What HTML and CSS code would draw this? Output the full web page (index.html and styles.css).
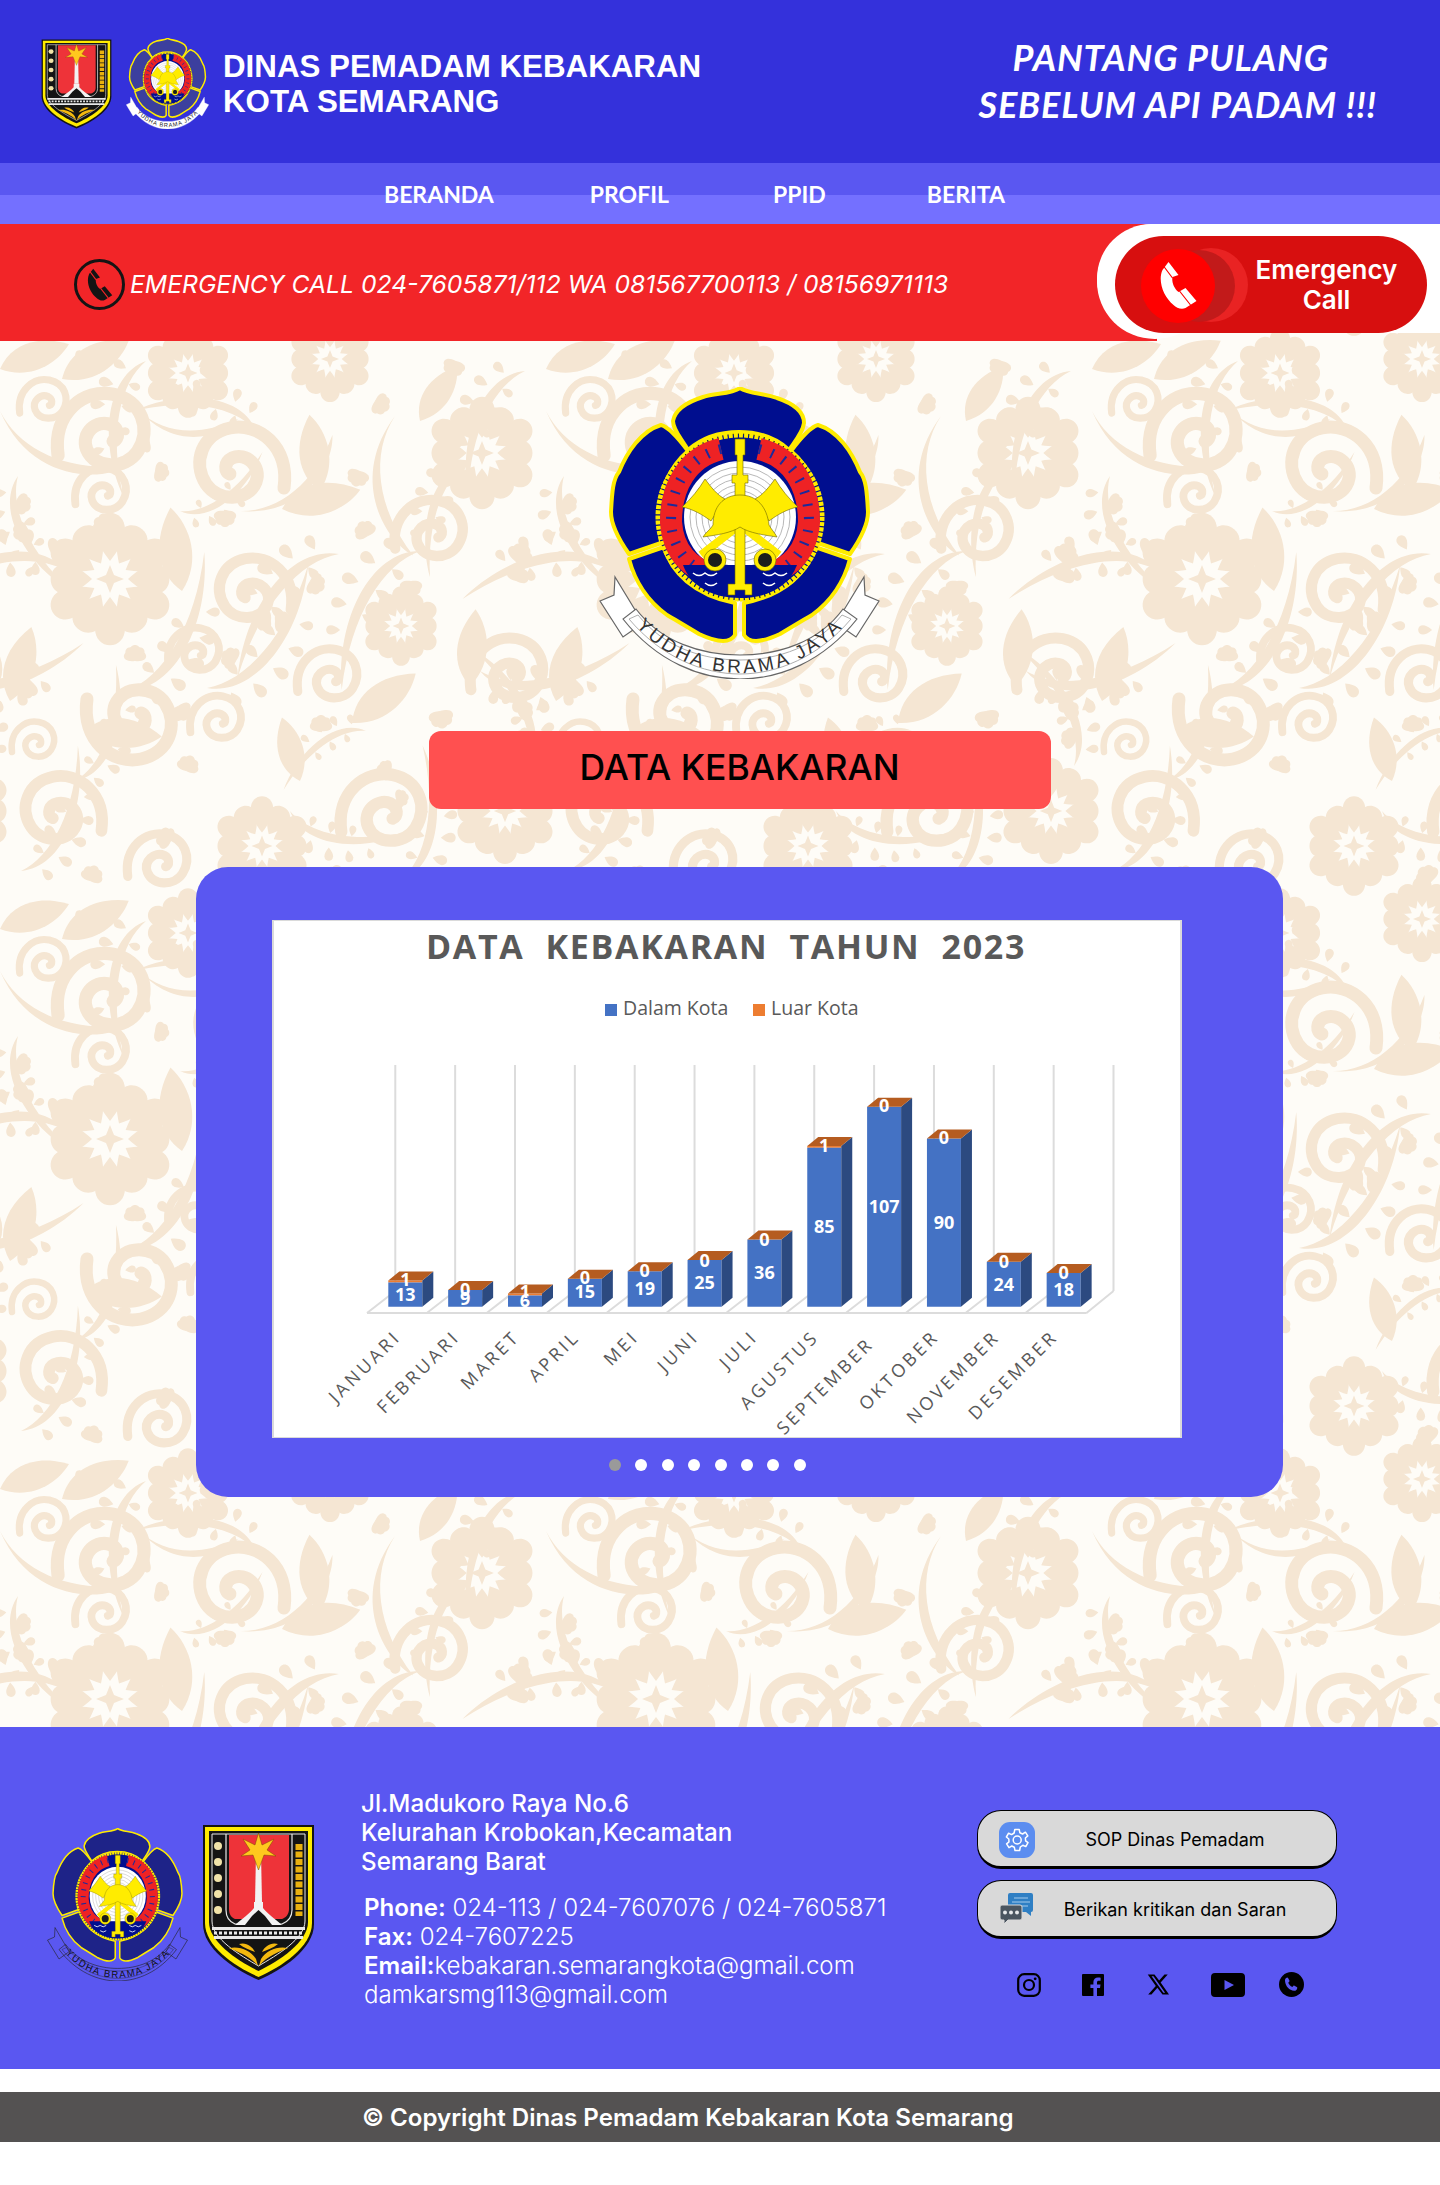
FILE: index.html
```html
<!DOCTYPE html>
<html lang="id">
<head>
<meta charset="utf-8">
<title>Dinas Pemadam Kebakaran Kota Semarang</title>
<link rel="stylesheet" href="styles.css">
</head>
<body>
<div class="page">

<svg class="bg-art" width="1440" height="1728" aria-hidden="true">
  <defs>
    <path id="dr" d="M0 0C5 -6 7.500 -11 7.500 -15C7.500 -20 4 -23 0 -23C-4 -23 -7.500 -20 -7.500 -15C-7.500 -11 -5 -6 0 0Z"/>
    <g id="fl">
      <path d="M0 -7L2 -2L7 0L2 2L0 7L-2 2L-7 0L-2 -2Z"/>
      <use href="#dr" transform="rotate(0) translate(0,-9) scale(1,1.05)"/>
      <use href="#dr" transform="rotate(30) translate(0,-9) scale(1,.9)"/>
      <use href="#dr" transform="rotate(60) translate(0,-9) scale(1,1.05)"/>
      <use href="#dr" transform="rotate(90) translate(0,-9) scale(1,.9)"/>
      <use href="#dr" transform="rotate(120) translate(0,-9) scale(1,1.05)"/>
      <use href="#dr" transform="rotate(150) translate(0,-9) scale(1,.9)"/>
      <use href="#dr" transform="rotate(180) translate(0,-9) scale(1,1.05)"/>
      <use href="#dr" transform="rotate(210) translate(0,-9) scale(1,.9)"/>
      <use href="#dr" transform="rotate(240) translate(0,-9) scale(1,1.05)"/>
      <use href="#dr" transform="rotate(270) translate(0,-9) scale(1,.9)"/>
      <use href="#dr" transform="rotate(300) translate(0,-9) scale(1,1.05)"/>
      <use href="#dr" transform="rotate(330) translate(0,-9) scale(1,.9)"/>
    </g>
    <path id="sw" class="bg-stroke" d="M-46 22C-52 -20 -20 -44 8 -38C36 -32 46 -4 32 18C20 36 -10 36 -18 16C-24 0 -8 -14 6 -8C14 -4 14 6 8 8"/>
    <path id="lf" d="M0 0C8 -26 34 -38 66 -32C56 -10 30 8 0 0Z"/>
    <path id="tl" d="M0 0C20 40 70 62 130 54C100 72 30 70 0 0Z"/>
    <g id="cl">
      <use href="#dr" transform="rotate(-56) scale(.55)"/>
      <use href="#dr" transform="rotate(-28) scale(.65)"/>
      <use href="#dr" transform="rotate(0) scale(.7)"/>
      <use href="#dr" transform="rotate(28) scale(.65)"/>
      <use href="#dr" transform="rotate(56) scale(.55)"/>
    </g>
    <g id="fern">
      <path d="M0 0C35 -6 72 -46 92 -112C86 -48 44 8 0 0Z"/>
      <use href="#dr" transform="translate(22,4) rotate(150) scale(.62)"/>
      <use href="#dr" transform="translate(42,-4) rotate(135) scale(.68)"/>
      <use href="#dr" transform="translate(60,-18) rotate(120) scale(.68)"/>
      <use href="#dr" transform="translate(74,-36) rotate(110) scale(.62)"/>
      <use href="#dr" transform="translate(84,-58) rotate(100) scale(.55)"/>
      <use href="#dr" transform="translate(28,-12) rotate(-40) scale(.55)"/>
      <use href="#dr" transform="translate(46,-28) rotate(-45) scale(.6)"/>
      <use href="#dr" transform="translate(62,-48) rotate(-50) scale(.55)"/>
    </g>
    <g id="t2">
      <use href="#fern" transform="translate(207,347) scale(1.1)"/>
      <use href="#fern" transform="translate(420,210) rotate(170) scale(1.1)"/>
      <use href="#fern" transform="translate(480,330) rotate(40) scale(1.05)"/>
      <use href="#fern" transform="translate(18,135) rotate(115) scale(.9)"/>
      <use href="#fern" transform="translate(75,440) rotate(-20) scale(.85)"/>
      <use href="#fern" transform="translate(290,470) rotate(60) scale(.85)"/>
      <use href="#fern" transform="translate(525,30) rotate(165) scale(.95)"/>
      <use href="#fern" transform="translate(400,540) rotate(-30) scale(.95)"/>
      <use href="#fern" transform="translate(180,170) rotate(15) scale(.7)"/>
      <use href="#cl" transform="translate(225,170) rotate(180) scale(1)"/>
      <use href="#cl" transform="translate(150,102) rotate(-100) scale(.8)"/>
      <use href="#cl" transform="translate(155,130) rotate(100) scale(.9)"/>
      <use href="#cl" transform="translate(275,280) rotate(90) scale(1)"/>
      <use href="#cl" transform="translate(310,240) rotate(120) scale(1)"/>
      <use href="#cl" transform="translate(28,188) rotate(-120) scale(1)"/>
      <use href="#cl" transform="translate(30,320) rotate(-160) scale(1)"/>
      <use href="#cl" transform="translate(135,320) rotate(0) scale(1)"/>
      <use href="#cl" transform="translate(178,365) rotate(150) scale(1)"/>
      <use href="#cl" transform="translate(375,60) rotate(120) scale(1)"/>
      <use href="#cl" transform="translate(515,220) rotate(45) scale(1.2)"/>
      <use href="#cl" transform="translate(440,370) rotate(170) scale(1.1)"/>
      <use href="#cl" transform="translate(340,540) rotate(-45) scale(1.1)"/>
      <use href="#cl" transform="translate(90,540) rotate(20) scale(1)"/>
      <use href="#cl" transform="translate(470,540) rotate(-100) scale(.9)"/>
      <use href="#cl" transform="translate(360,130) rotate(200) scale(1)"/>
      <use href="#cl" transform="translate(530,400) rotate(-60) scale(1)"/>
    </g>
    <g id="t" class="bg-motif">
      <use href="#fl" transform="translate(110,238) scale(2)"/>
      <use href="#fl" transform="translate(188,32) scale(1.35)"/>
      <use href="#fl" transform="translate(330,18) scale(1.3)"/>
      <use href="#fl" transform="translate(401,285) scale(1.2)"/>
      <use href="#fl" transform="translate(482,112) scale(1.7)"/>
      <use href="#fl" transform="translate(505,470) scale(1.6)"/>
      <use href="#fl" transform="translate(262,505) scale(1.5)"/>
      <use href="#sw" transform="translate(105,92) scale(1.02)"/>
      <use href="#sw" transform="translate(45,60) scale(.55)"/>
      <use href="#sw" transform="translate(238,125) scale(-1,1)"/>
      <use href="#sw" transform="translate(103,150) scale(.6)"/>
      <use href="#sw" transform="translate(252,250) scale(-.85,.85)"/>
      <use href="#sw" transform="translate(196,310) scale(.6)"/>
      <use href="#sw" transform="translate(133,380) scale(1,-1)"/>
      <use href="#sw" transform="translate(330,335) scale(.7)"/>
      <use href="#sw" transform="translate(218,378) scale(.6)"/>
      <use href="#sw" transform="translate(432,190) scale(.8)"/>
      <use href="#sw" transform="translate(60,470) scale(-.9,.9)"/>
      <use href="#sw" transform="translate(385,470) scale(.95)"/>
      <use href="#sw" transform="translate(160,520) scale(.7)"/>
      <use href="#sw" transform="translate(510,330) scale(.85)"/>
      <use href="#sw" transform="translate(35,400) scale(.5)"/>
      <use href="#lf" transform="translate(0,28) rotate(6) scale(1)"/>
      <use href="#lf" transform="translate(62,38) rotate(-4) scale(1.05)"/>
      <use href="#lf" transform="translate(320,150) rotate(-72) scale(1.05)"/>
      <use href="#lf" transform="translate(182,250) rotate(-72) scale(1.15)"/>
      <use href="#lf" transform="translate(282,168) rotate(12) scale(1.1)"/>
      <use href="#lf" transform="translate(10,360) rotate(-48) scale(1.05)"/>
      <use href="#lf" transform="translate(352,382) rotate(-12) scale(1.1)"/>
      <use href="#lf" transform="translate(85,390) rotate(30) scale(1.05)"/>
      <use href="#lf" transform="translate(470,345) rotate(-60) scale(1.05)"/>
      <use href="#lf" transform="translate(300,440) rotate(-80) scale(.9)"/>
      <use href="#lf" transform="translate(420,80) rotate(-30) scale(.9)"/>
      <use href="#lf" transform="translate(440,420) rotate(20) scale(.85)"/>
      <use href="#tl" transform="translate(0,70) rotate(0) scale(1)"/>
      <use href="#tl" transform="translate(240,170) rotate(-62) scale(.85)"/>
      <use href="#tl" transform="translate(395,75) rotate(60) scale(1)"/>
      <use href="#tl" transform="translate(140,70) rotate(-18) scale(.7)"/>
      <use href="#t2"/>
      <use href="#t2" transform="rotate(180 273 280)"/>
    </g>
    <pattern id="floral" width="546" height="560" x="0" y="341" patternUnits="userSpaceOnUse">
      <use href="#t"/>
      <use href="#t" x="-546"/>
      <use href="#t" x="546"/>
      <use href="#t" y="-560"/>
      <use href="#t" y="560"/>
      <use href="#t" x="-546" y="-560"/>
      <use href="#t" x="546" y="-560"/>
      <use href="#t" x="-546" y="560"/>
      <use href="#t" x="546" y="560"/>
    </pattern>

    <symbol id="emblem" viewBox="0 0 281 292" preserveAspectRatio="none">
      <path id="em-tail" class="em-ribbon" d="M1 214L15 208L16 190L44 236L24 250Z"/>
      <use href="#em-tail" transform="matrix(-1 0 0 1 281 0)"/>
      <path class="em-ribbon" d="M24 232C58 275 102 292 141 292C180 292 224 275 258 232L244 222C220 255 180 268 141 268C102 268 62 255 37 222Z"/>
      <path class="em-inset" d="M30 232C62 270 104 287 141 287C178 287 220 270 252 232L243 228C218 259 180 273 141 273C102 273 64 259 39 228Z"/>
      <path id="em-arc" class="em-none" d="M20 218C58 272 105 286 141 286C177 286 224 272 262 218"/>
      <text class="em-text"><textPath href="#em-arc" startOffset="50%" text-anchor="middle">YUDHA BRAMA JAYA</textPath></text>
      <g class="em-petal">
        <path d="M141 1C150 7 165 6 178 11C196 17 205 25 205 36C204 45 197 53 190 63C175 49 158 45 140 45C122 45 105 49 89 63C82 51 74 43 74 34C76 23 88 15 104 10C117 6 132 7 141 1Z"/>
        <path id="em-ul" d="M62 38C70 40 80 52 89 64C70 80 60 105 60 130C60 140 62 148 62 156L30 167C18 150 12 135 12 125C13 105 14 92 20 85C28 65 42 44 62 38Z"/>
        <use href="#em-ul" transform="matrix(-1 0 0 1 281 0)"/>
        <path id="em-ll" d="M30 172L65 160C72 185 95 208 136 216L136 248C130 258 115 254 100 247C85 238 75 232 68 228C50 215 36 195 30 172Z"/>
        <use href="#em-ll" transform="matrix(-1 0 0 1 281 0)"/>
      </g>
      <circle class="em-ring-bg" cx="141" cy="130" r="83"/>
      <circle class="em-ring" cx="141" cy="130" r="82"/>
      <circle class="em-white" cx="141" cy="130" r="56"/>
      <circle class="em-coil" cx="141" cy="130" r="50"/>
      <circle class="em-coil" cx="141" cy="130" r="44"/>
      <circle class="em-coil" cx="141" cy="130" r="38"/>
      <circle class="em-coil" cx="141" cy="130" r="32"/>
      <circle class="em-coil" cx="141" cy="130" r="26"/>
      <circle class="em-coil" cx="141" cy="130" r="20"/>
      <path class="em-wreath" d="M122 62C88 70 72 100 72 135C74 165 92 182 112 186"/>
      <path class="em-wreath" d="M160 62C194 70 210 100 210 135C208 165 190 182 170 186"/>
      <path class="em-flame" d="M122 62C88 70 72 100 72 135C74 165 92 182 112 186"/>
      <path class="em-flame" d="M160 62C194 70 210 100 210 135C208 165 190 182 170 186"/>
      <path class="em-water" d="M84 178H198C190 200 168 211 141 211C114 211 92 200 84 178Z"/>
      <path class="em-wave" d="M94 186q6 5 12 0q6 5 12 0M106 196q6 5 12 0M164 186q6 5 12 0q6 5 12 0M164 196q6 5 12 0"/>
      <path class="em-handle" d="M108 112L180 168M174 112L102 168"/>
      <path id="em-axe" class="em-gold" d="M106 92C112 100 118 108 126 112L112 134C104 128 94 122 83 120C92 112 100 102 106 92Z"/>
      <use href="#em-axe" transform="matrix(-1 0 0 1 282 0)"/>
      <path class="em-gold" d="M136 52H146V68H144V88H149V96H146V197H153V208H146V203H136V208H129V197H136V96H133V88H138V68H136Z"/>
      <path class="em-gold" d="M114 138C114 120 124 108 141 108C158 108 168 120 170 138C172 142 176 146 178 150C165 148 150 146 141 140C132 146 118 148 104 150C106 146 112 142 114 138Z"/>
      <circle class="em-gold" cx="116" cy="173" r="11"/>
      <circle class="em-gold" cx="166" cy="173" r="11"/>
      <circle class="em-dark" cx="116" cy="173" r="7"/>
      <circle class="em-dark" cx="166" cy="173" r="7"/>
    </symbol>

    <symbol id="crest" viewBox="0 0 113 157" preserveAspectRatio="none">
      <path class="cr-edge" d="M1 1H112V100C112 125 80 146 56.5 156C33 146 1 125 1 100Z"/>
      <path class="cr-yellow" d="M3 3H110V99C110 123 79 143 56.5 153C34 143 3 123 3 99Z"/>
      <path class="cr-edge" d="M7 7H106V98C106 118 77 137 56.5 147C36 137 7 118 7 98Z"/>
      <path class="cr-line" d="M10 10V97C10 115 38 131 56.5 142C75 131 103 115 103 97V10Z"/>
      <path class="cr-red" d="M27 11H87V85C87 91 83 94 80 95L33 95C30 94 27 91 27 85Z"/>
      <path class="cr-pale" d="M24 10V86C24 94 28 98 33 100H80C85 98 90 94 90 86V10"/>
      <path class="cr-white" d="M54 30H59L60 78H53Z"/>
      <path class="cr-star" d="M56.5 9L60 21L72 15L65 26L74 32L62 31L56.5 46L51 31L39 32L48 26L41 15L53 21Z"/>
      <path class="cr-white" d="M52 78H61V84C66 90 72 94 80 101H33C41 94 47 90 52 84Z"/>
      <path class="cr-edge" d="M50 92L56.500 86L63 92L70 101H43Z"/>
      <path class="cr-wall" d="M10 103H103V106H10Z"/>
      <path class="cr-brick" d="M12 109H101"/>
      <path class="cr-wall" d="M12 112H101V115H12Z"/>
      <path class="cr-gold" d="M27 124C38 122 48 126 54 135L56 142C48 132 36 128 27 124Z"/>
      <path class="cr-gold" d="M86 124C75 122 65 126 59 135L57 142C65 132 77 128 86 124Z"/>
      <path class="cr-gold" d="M37 120C44 118 50 122 53 128C48 126 42 124 37 120Z"/>
      <path class="cr-gold" d="M76 120C69 118 63 122 60 128C65 126 71 124 76 120Z"/>
      <g class="cr-bud">
        <circle cx="16" cy="22" r="4"/><circle cx="16" cy="38" r="4"/><circle cx="16" cy="54" r="4"/><circle cx="16" cy="70" r="4"/><circle cx="16" cy="86" r="4"/>
      </g>
      <path class="cr-rice" d="M97 20V92"/>
    </symbol>

    <symbol id="phone" viewBox="0 0 38 50">
      <path d="M9 1L19 14L13 16C12 20 14 27 19 31L26 27L37 40L26 47C22 49 17 47 14 44C4 36 -2 20 3 9Z"/>
    </symbol>
  </defs>
  <rect class="bg-base" width="1440" height="1728"/>
  <rect width="1440" height="1728" fill="url(#floral)"/>
</svg>

<header class="masthead">
  <svg class="crest-sm"><use href="#crest"/></svg>
  <svg class="emblem-sm"><use href="#emblem"/></svg>
  <h1 class="agency">DINAS PEMADAM KEBAKARAN<br>KOTA SEMARANG</h1>
  <p class="slogan"><span class="slogan-a">PANTANG PULANG</span><br>SEBELUM API PADAM !!!</p>
</header>

<nav class="menu">
  <a class="menu-home">BERANDA</a>
  <a class="menu-profil">PROFIL</a>
  <a class="menu-ppid">PPID</a>
  <a class="menu-berita">BERITA</a>
</nav>

<section class="alert-row">
  <div class="alert">
    <span class="alert-icon"><svg class="alert-phone" viewBox="0 0 38 50"><use href="#phone"/><path class="alert-cut" d="M4 5L13 17M20 30L31 44"/></svg></span>
    <span class="alert-text">EMERGENCY CALL 024-7605871/112 WA 081567700113 / 08156971113</span>
  </div>
  <div class="cta-slot">
    <a class="cta">
      <span class="cta-dial">
        <svg class="cta-phone" viewBox="0 0 38 50"><use href="#phone"/><path class="cta-cut" d="M4 5L13 17M20 30L31 44"/></svg>
      </span>
      <span class="cta-label">Emergency<br>Call</span>
    </a>
  </div>
</section>

<main class="content">
  <svg class="emblem-lg"><use href="#emblem"/></svg>
  <h2 class="section-title">DATA KEBAKARAN</h2>

  <section class="slider">
    <svg class="chart" viewBox="0 0 911 518" role="img" aria-label="Data kebakaran tahun 2023">
      <rect class="c-paper" x="1" y="0" width="908" height="518"/>
      <text class="c-title" x="454" y="39">DATA  KEBAKARAN  TAHUN  2023</text>
      <rect class="c-blue" x="333" y="84" width="12" height="12"/>
      <text class="c-legend" x="351" y="95">Dalam Kota</text>
      <rect class="c-orange" x="481" y="84" width="12" height="12"/>
      <text class="c-legend" x="499" y="95">Luar Kota</text>
      <path class="c-grid" d="M123.3 145V371M183.15 145V371M243 145V371M302.85 145V371M362.7 145V371M422.55 145V371M482.4 145V371M542.25 145V371M602.1 145V371M661.95 145V371M721.8 145V371M781.65 145V371M841.5 145V371"/>
      <path class="c-grid" d="M95 393H814.5M95 393L123.3 371M154.85 393L183.15 371M214.7 393L243 371M274.55 393L302.85 371M334.4 393L362.7 371M394.25 393L422.55 371M454.1 393L482.4 371M513.95 393L542.25 371M573.8 393L602.1 371M633.65 393L661.95 371M693.5 393L721.8 371M753.35 393L781.65 371M814.5 393L841.5 371"/>

      <g transform="translate(116.3,0)">
        <path class="c-o" d="M0 360.5H34V362.4H0Z"/><path class="c-f" d="M0 362.4H34V386.7H0Z"/><path class="c-s" d="M34 360.5l11 -9V377.7l-11 9Z"/><path class="c-t" d="M0 360.5l11 -9h34l-11 9Z"/>
        <text class="c-num" x="17" y="366">1</text><text class="c-num" x="17" y="381">13</text>
      </g>
      <g transform="translate(176.15,0)">
        <path class="c-f" d="M0 369.9H34V386.7H0Z"/><path class="c-s" d="M34 369.9l11 -9V377.7l-11 9Z"/><path class="c-t" d="M0 369.9l11 -9h34l-11 9Z"/>
        <text class="c-num" x="17" y="376">0</text><text class="c-num" x="17" y="385">9</text>
      </g>
      <g transform="translate(236,0)">
        <path class="c-o" d="M0 373.6H34V375.5H0Z"/><path class="c-f" d="M0 375.5H34V386.7H0Z"/><path class="c-s" d="M34 373.6l11 -9V377.7l-11 9Z"/><path class="c-t" d="M0 373.6l11 -9h34l-11 9Z"/>
        <text class="c-num" x="17" y="378">1</text><text class="c-num" x="17" y="387">6</text>
      </g>
      <g transform="translate(295.85,0)">
        <path class="c-f" d="M0 358.7H34V386.7H0Z"/><path class="c-s" d="M34 358.7l11 -9V377.7l-11 9Z"/><path class="c-t" d="M0 358.7l11 -9h34l-11 9Z"/>
        <text class="c-num" x="17" y="364">0</text><text class="c-num" x="17" y="378">15</text>
      </g>
      <g transform="translate(355.7,0)">
        <path class="c-f" d="M0 351.2H34V386.7H0Z"/><path class="c-s" d="M34 351.2l11 -9V377.7l-11 9Z"/><path class="c-t" d="M0 351.2l11 -9h34l-11 9Z"/>
        <text class="c-num" x="17" y="357">0</text><text class="c-num" x="17" y="375">19</text>
      </g>
      <g transform="translate(415.55,0)">
        <path class="c-f" d="M0 339.9H34V386.7H0Z"/><path class="c-s" d="M34 339.9l11 -9V377.7l-11 9Z"/><path class="c-t" d="M0 339.9l11 -9h34l-11 9Z"/>
        <text class="c-num" x="17" y="347">0</text><text class="c-num" x="17" y="369">25</text>
      </g>
      <g transform="translate(475.4,0)">
        <path class="c-f" d="M0 319.4H34V386.7H0Z"/><path class="c-s" d="M34 319.4l11 -9V377.7l-11 9Z"/><path class="c-t" d="M0 319.4l11 -9h34l-11 9Z"/>
        <text class="c-num" x="17" y="326">0</text><text class="c-num" x="17" y="359">36</text>
      </g>
      <g transform="translate(535.25,0)">
        <path class="c-o" d="M0 225.9H34V227.7H0Z"/><path class="c-f" d="M0 227.7H34V386.7H0Z"/><path class="c-s" d="M34 225.9l11 -9V377.7l-11 9Z"/><path class="c-t" d="M0 225.9l11 -9h34l-11 9Z"/>
        <text class="c-num" x="17" y="232">1</text><text class="c-num" x="17" y="313">85</text>
      </g>
      <g transform="translate(595.1,0)">
        <path class="c-f" d="M0 186.7H34V386.7H0Z"/><path class="c-s" d="M34 186.7l11 -9V377.7l-11 9Z"/><path class="c-t" d="M0 186.7l11 -9h34l-11 9Z"/>
        <text class="c-num" x="17" y="192">0</text><text class="c-num" x="17" y="293">107</text>
      </g>
      <g transform="translate(654.95,0)">
        <path class="c-f" d="M0 218.4H34V386.7H0Z"/><path class="c-s" d="M34 218.4l11 -9V377.7l-11 9Z"/><path class="c-t" d="M0 218.4l11 -9h34l-11 9Z"/>
        <text class="c-num" x="17" y="224">0</text><text class="c-num" x="17" y="309">90</text>
      </g>
      <g transform="translate(714.8,0)">
        <path class="c-f" d="M0 341.8H34V386.7H0Z"/><path class="c-s" d="M34 341.8l11 -9V377.7l-11 9Z"/><path class="c-t" d="M0 341.8l11 -9h34l-11 9Z"/>
        <text class="c-num" x="17" y="348">0</text><text class="c-num" x="17" y="371">24</text>
      </g>
      <g transform="translate(774.65,0)">
        <path class="c-f" d="M0 353H34V386.7H0Z"/><path class="c-s" d="M34 353l11 -9V377.7l-11 9Z"/><path class="c-t" d="M0 353l11 -9h34l-11 9Z"/>
        <text class="c-num" x="17" y="359">0</text><text class="c-num" x="17" y="376">18</text>
      </g>

      <text class="c-month" transform="translate(130,418) rotate(-45)">JANUARI</text>
      <text class="c-month" transform="translate(189,418) rotate(-45)">FEBRUARI</text>
      <text class="c-month" transform="translate(249,418) rotate(-45)">MARET</text>
      <text class="c-month" transform="translate(309,418) rotate(-45)">APRIL</text>
      <text class="c-month" transform="translate(368,418) rotate(-45)">MEI</text>
      <text class="c-month" transform="translate(428,418) rotate(-45)">JUNI</text>
      <text class="c-month" transform="translate(487,418) rotate(-45)">JULI</text>
      <text class="c-month" transform="translate(548,418) rotate(-45)">AGUSTUS</text>
      <text class="c-month" transform="translate(603,425) rotate(-45)">SEPTEMBER</text>
      <text class="c-month" transform="translate(668,418) rotate(-45)">OKTOBER</text>
      <text class="c-month" transform="translate(729,418) rotate(-45)">NOVEMBER</text>
      <text class="c-month" transform="translate(787,418) rotate(-45)">DESEMBER</text>
    </svg>
    <div class="dots">
      <span class="dot dot-on"></span><span class="dot"></span><span class="dot"></span><span class="dot"></span><span class="dot"></span><span class="dot"></span><span class="dot"></span><span class="dot"></span>
    </div>
  </section>
</main>

<footer class="site-foot">
  <div class="foot-logos">
    <svg class="emblem-ft"><use href="#emblem"/></svg>
    <svg class="crest-ft"><use href="#crest"/></svg>
  </div>
  <div class="foot-info">
    <p class="address">Jl.Madukoro Raya No.6<br>Kelurahan Krobokan,Kecamatan<br>Semarang Barat</p>
    <p class="contact"><b>Phone:</b> 024-113 / 024-7607076 / 024-7605871<br><b>Fax:</b> 024-7607225<br><b>Email:</b>kebakaran.semarangkota@gmail.com<br>damkarsmg113@gmail.com</p>
  </div>
  <div class="foot-actions">
    <a class="pill">
      <svg class="pill-icon" viewBox="0 0 37 37">
        <rect class="gear-bg" width="36" height="36" rx="11"/>
        <path class="gear" d="M15.8 7.5H20.2L20.9 10.8L23.6 12L26.4 10.2L28.8 13.9L26.4 16L26.6 18.8L29 20.7L26.8 24.6L23.8 23.3L21.3 25L20.6 28.5H16L15.3 25.2L12.8 24L10 25.6L7.6 21.8L10 19.8L9.8 17L7.4 15L9.6 11.2L12.6 12.6L15.1 11Z"/>
        <circle class="gear" cx="18.2" cy="18" r="4"/>
      </svg>
      <span class="pill-text">SOP Dinas Pemadam</span>
    </a>
    <a class="pill">
      <svg class="pill-icon" viewBox="0 0 37 37">
        <path class="msg-blue" d="M11 1H32Q34 1 34 3V18Q34 20 32 20L32 24L27 20H11Q9 20 9 18V3Q9 1 11 1Z"/>
        <path class="msg-lines" d="M15 6H29M13 10H31M15 14H29"/>
        <path class="msg-gray" d="M3 13H21Q23 13 23 15V26Q23 28 21 28H9L5 32V28H3Q1 28 1 26V15Q1 13 3 13Z"/>
        <circle class="msg-dot" cx="6" cy="20.5" r="2"/><circle class="msg-dot" cx="12" cy="20.5" r="2"/><circle class="msg-dot" cx="18" cy="20.5" r="2"/>
      </svg>
      <span class="pill-text">Berikan kritikan dan Saran</span>
    </a>
    <div class="socials">
      <svg class="so so-ig" viewBox="0 0 24 24"><rect class="so-line" x="1.2" y="1.2" width="21.6" height="21.6" rx="6"/><circle class="so-line" cx="12" cy="12" r="5"/><circle cx="18.2" cy="5.8" r="1.4"/></svg>
      <svg class="so so-fb" viewBox="0 0 22 22"><path fill-rule="evenodd" d="M1 0H21Q22 0 22 1V21Q22 22 21 22H15V14H18L18.5 10.5H15V8.5C15 7.4 15.5 6.8 16.8 6.8H18.6V3.7C18 3.6 17 3.5 16 3.5C13.3 3.5 11.4 5.2 11.4 8.1V10.5H8.4V14H11.4V22H1Q0 22 0 21V1Q0 0 1 0Z"/></svg>
      <svg class="so so-x" viewBox="0 0 24 24"><path fill-rule="evenodd" d="M18.24 1.5h3.4l-7.4 8.5L23 22.5h-6.85l-5.36-7-6.13 7H1.25l7.93-9.06L.8 1.5h7.02l4.84 6.4zM17.05 20.5h1.88L6.78 3.4H4.76z"/></svg>
      <svg class="so so-yt" viewBox="0 0 34 24"><path fill-rule="evenodd" d="M4 0H30Q34 0 34 4V20Q34 24 30 24H4Q0 24 0 20V4Q0 0 4 0ZM13.5 7V17L23 12Z"/></svg>
      <svg class="so so-wa" viewBox="0 0 25 25"><circle cx="12.5" cy="12.5" r="12.5"/><path class="so-wa-ph" d="M8.2 5.6c.4 0 .8.2 1 .6l1.2 2.4c.2.4.1.8-.2 1.1l-1 1c.9 1.9 2.1 3.2 4.1 4.2l1-1c.3-.3.7-.4 1.1-.2l2.4 1.2c.4.2.6.6.5 1-.3 1.8-1.5 3-3.2 2.9C10.300 18.300 6.600 14.500 6 9 5.800 7.300 6.600 5.900 8.200 5.600z"/></svg>
    </div>
  </div>
</footer>

<div class="foot-gap"></div>
<div class="copyright"><span class="copyright-text">© Copyright Dinas Pemadam Kebakaran Kota Semarang</span></div>
<div class="foot-end"></div>
</div>
</body>
</html>
```
FILE: styles.css
```css
* { box-sizing: border-box; }
html, body { margin: 0; padding: 0; }
body { font-family: "Inter", "Liberation Sans", sans-serif; background: #fff; }
a { text-decoration: none; color: inherit; }
h1, h2, p { margin: 0; }
svg { display: block; }

.page { position: relative; isolation: isolate; width: 1440px; height: 2185px; overflow: hidden; }

/* decorative page background */
.bg-art { position: absolute; left: 0; top: 0; z-index: -1; }
.bg-base { fill: #FEFCF7; }
.bg-motif { fill: #F5E6D3; }
.bg-stroke { fill: none; stroke: #F5E6D3; stroke-width: 13; stroke-linecap: round; }

/* masthead */
.masthead { display: flex; align-items: center; height: 163px; padding: 4px 63px 0 41px; background: #3431DB; color: #fff; }
.crest-sm { width: 71px; height: 90px; flex: none; }
.emblem-sm { width: 83px; height: 91px; margin-left: 14px; flex: none; }
.agency { margin-left: 14px; font: 700 31.3px/35px "Liberation Sans", sans-serif; white-space: nowrap; }
.slogan { margin: -6px 0 0 auto; font: italic 700 36px/47px "Lato", sans-serif; letter-spacing: .85px; text-align: center; white-space: nowrap; }
.slogan-a { display: inline-block; margin-right: 14px; }

/* menu */
.menu { display: flex; align-items: center; height: 61px; padding: 2px 0 0 384px; background: linear-gradient(#5A57F1 0 32px, #7470FF 32px 61px); color: #fff; font: 700 23px/1 "Lato", sans-serif; }
.menu-profil { margin-left: 96px; }
.menu-ppid { margin-left: 104px; }
.menu-berita { margin-left: 101px; }

/* emergency */
.alert-row { display: flex; height: 117px; }
.alert { flex: 1; margin-right: -60px; display: flex; align-items: center; gap: 5px; padding: 4px 0 0 74px; background: #F22528; }
.alert-icon { width: 51px; height: 51px; border: 3px solid #141414; border-radius: 50%; display: flex; align-items: center; justify-content: center; flex: none; }
.alert-phone { width: 26px; height: 34px; fill: #141414; }
.alert-cut { fill: none; stroke: #F22528; stroke-width: 1.6; }
.alert-text { color: #fff; font: italic 400 24.7px/1 "Inter", sans-serif; white-space: nowrap; }
.cta-slot { position: relative; z-index: 0; width: 343px; height: 109px; padding: 12px 13px 0 18px; background: #fff; border-radius: 58px 0 0 58px; }
.cta-slot::before { content: ""; position: absolute; left: 0; top: 0; z-index: -1; width: 116px; height: 115px; background: #fff; border-radius: 58px; }
.cta { display: flex; align-items: center; height: 97px; border-radius: 49px; background: #D70F0F; padding-left: 26px; color: #fff; }
.cta-dial { position: relative; z-index: 1; width: 74px; height: 74px; margin-top: 2px; border-radius: 50%; background: #FF0000; flex: none; display: flex; align-items: center; justify-content: center; box-shadow: 21px 0 0 -1px #C21A1A, 33px -1px 0 0 #E92323; }
.cta-phone { width: 39px; height: 50px; fill: #fff; }
.cta-cut { fill: none; stroke: #FF0000; stroke-width: 1.2; }
.cta-label { flex: 1; margin-left: 39px; text-align: center; font: 600 26px/30px "Inter", sans-serif; padding-right: 28px; position: relative; z-index: 1; }

/* content */
.content { height: 1386px; padding: 46px 0 0 39px; display: flex; flex-direction: column; align-items: center; }
.emblem-lg { width: 281px; height: 292px; flex: none; }
.section-title { width: 622px; height: 78px; margin-top: 52px; padding-bottom: 4px; flex: none; display: flex; align-items: center; justify-content: center; border-radius: 12px; background: #FF5050; color: #000; font: 500 35.5px/1 "Inter", sans-serif; }
.slider { width: 1087px; height: 630px; margin-top: 58px; padding: 53px 0 0 76px; border-radius: 32px; background: #5A57F1; flex: none; }
.chart { width: 911px; height: 518px; }
.dots { display: flex; gap: 14.4px; margin: 21px 0 0 337px; }
.dot { width: 12px; height: 12px; border-radius: 50%; background: #fff; }
.dot-on { background: #9A9A9A; }

/* chart */
.c-paper { fill: #fff; stroke: #DADADA; stroke-width: 2; }
.c-title { font: 700 34px "Open Sans", sans-serif; fill: #595959; text-anchor: middle; letter-spacing: 1.7px; white-space: pre; }
.c-legend { font: 400 19.5px "Open Sans", sans-serif; fill: #595959; }
.c-blue { fill: #4472C4; }
.c-orange { fill: #ED7D31; }
.c-grid { fill: none; stroke: #DCDCDC; stroke-width: 2; }
.c-f { fill: #4472C4; }
.c-o { fill: #ED7D31; }
.c-s { fill: #2C4A80; }
.c-t { fill: #B55C20; }
.c-num { font: 700 18px "Open Sans", sans-serif; fill: #fff; text-anchor: middle; }
.c-month { font: 400 18px "Open Sans", sans-serif; fill: #595959; text-anchor: end; letter-spacing: 3.2px; }

/* footer */
.site-foot { display: flex; height: 342px; background: #5A57F1; color: #fff; }
.foot-logos { display: flex; gap: 14px; width: 311px; padding: 97px 0 0 47px; flex: none; }
.emblem-ft { width: 141px; height: 153px; margin-top: 4px; flex: none; }
.crest-ft { width: 113px; height: 157px; flex: none; }
.foot-info { width: 616px; padding: 62px 0 0 50px; flex: none; }
.address { font: 500 24.2px/29px "Inter", sans-serif; white-space: nowrap; }
.contact { margin: 17px 0 0 3px; font: 300 24.1px/29px "Inter", sans-serif; white-space: nowrap; }
.contact b { font-weight: 600; }
.foot-actions { padding: 83px 0 0 50px; width: 410px; flex: none; }
.pill { display: flex; align-items: center; position: relative; width: 360px; height: 59px; margin-bottom: 11px; padding: 3px 0 0 21px; border: 1px solid #000; border-bottom-width: 3px; border-radius: 24px; background: #D9D9D9; color: #000; }
.pill-icon { width: 37px; height: 37px; flex: none; }
.pill-text { flex: 1; text-align: center; font: 400 18px/1 "Inter", sans-serif; padding-right: 22px; white-space: nowrap; }
.gear-bg { fill: #5B8DF0; }
.gear { fill: none; stroke: #fff; stroke-width: 1.5; stroke-linejoin: round; }
.msg-blue { fill: #2F7FC4; }
.msg-lines { fill: none; stroke: #A6CCEB; stroke-width: 1.2; }
.msg-gray { fill: #4A5560; stroke: #D9D9D9; stroke-width: 1; }
.msg-dot { fill: #E6E8EA; }
.socials { display: flex; align-items: center; margin: 33px 0 0 40px; }
.so { fill: #000; flex: none; }
.so-line { fill: none; stroke: #000; stroke-width: 2.2; }
.so-ig { width: 24px; height: 24px; }
.so-fb { width: 22px; height: 22px; margin-left: 41px; }
.so-x { width: 23px; height: 23px; margin-left: 43px; }
.so-yt { width: 34px; height: 24px; margin-left: 41px; }
.so-wa { width: 25px; height: 25px; margin-left: 34px; }
.so-wa-ph { fill: #5A57F1; }

.foot-gap { height: 23px; background: #fff; }
.copyright { height: 50px; padding: 2px 0 0 362px; background: #545252; color: #fff; display: flex; align-items: center; }
.copyright-text { font: 600 24.1px/1 "Inter", sans-serif; white-space: nowrap; }
.foot-end { height: 43px; background: #fff; }

/* emblem parts */
.em-petal { fill: var(--petal, #000E8F); stroke: var(--em-line, #FFEC00); stroke-width: var(--em-w, 4); stroke-linejoin: round; }
.em-ribbon { fill: var(--rib, #fff); stroke: var(--rib-line, #666); stroke-width: 1.2; }
.em-inset { fill: none; stroke: var(--rib-line, #999); stroke-width: .8; }
.em-none { fill: none; stroke: none; }
.em-text { font: 400 19px "Liberation Sans", sans-serif; fill: var(--rib-text, #333); letter-spacing: 3px; }
.em-ring-bg { fill: #000E8F; stroke: #2A2A10; stroke-width: 1; }
.em-ring { fill: none; stroke: #FFEC00; stroke-width: 5; stroke-dasharray: 4 1.2; }
.em-wreath { fill: none; stroke: #EE2224; stroke-width: 22; }
.em-flame { fill: none; stroke: #1D2A9A; stroke-width: 10; stroke-dasharray: 2 11; }
.em-white { fill: #fff; }
.em-coil { fill: none; stroke: #B8B8B8; stroke-width: 1; }
.em-water { fill: #000E8F; }
.em-wave { fill: none; stroke: #fff; stroke-width: 1.6; }
.em-gold { fill: #FFEC00; stroke: #6D6400; stroke-width: .6; }
.em-handle { fill: none; stroke: #FFEC00; stroke-width: 8; }
.em-dark { fill: #1C1C1C; }

.emblem-sm { --petal: #3C3F9E; --em-w: 5; --rib: #fff; --rib-line: #fff; --rib-text: #222; }
.emblem-ft { --petal: #1E2388; --em-w: 3; --rib: transparent; --rib-line: #222; --rib-text: #111; }

/* crest parts */
.cr-edge { fill: #141414; }
.cr-yellow { fill: #FFEB00; }
.cr-line { fill: none; stroke: #E8E8E8; stroke-width: 1; }
.cr-red { fill: #EE3339; }
.cr-pale { fill: none; stroke: #E8E8E8; stroke-width: 1.2; }
.cr-star { fill: #FFC91E; stroke: #7A4A00; stroke-width: .5; }
.cr-white { fill: #F2F2F2; }
.cr-wall { fill: #E8E8E8; }
.cr-brick { fill: none; stroke: #E8E8E8; stroke-width: 3; stroke-dasharray: 3 2; }
.cr-gold { fill: #F4B90F; }
.cr-bud { fill: #F1E3A8; }
.cr-rice { fill: none; stroke: #E9B10F; stroke-width: 7; stroke-dasharray: 6 1.500; }
```
